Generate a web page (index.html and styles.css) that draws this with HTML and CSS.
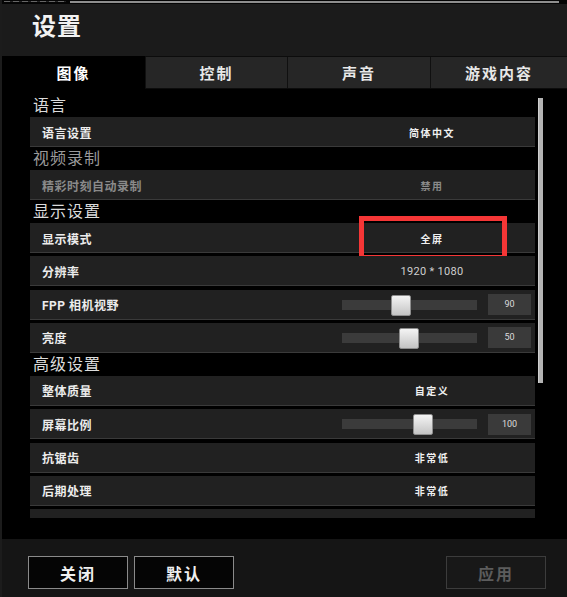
FILE: index.html
```html
<!DOCTYPE html>
<html lang="zh-CN">
<head>
<meta charset="utf-8">
<title>设置</title>
<link rel="stylesheet" href="styles.css">
</head>
<body>
<div class="window">
  <div class="topbar"><div class="topbar-dots"></div><div class="topbar-line"></div></div>
  <div class="header"><h1 class="title">设置</h1></div>
  <div class="tabs">
    <div class="tab active">图像</div>
    <div class="tab">控制</div>
    <div class="tab">声音</div>
    <div class="tab">游戏内容</div>
  </div>
  <div class="main">
    <div class="list">
      <div class="section-title">语言</div>
      <div class="row"><div class="label">语言设置</div><div class="value">简体中文</div></div>

      <div class="section-title dim">视频录制</div>
      <div class="row disabled"><div class="label">精彩时刻自动录制</div><div class="value">禁用</div></div>

      <div class="section-title">显示设置</div>
      <div class="group">
        <div class="row"><div class="label">显示模式</div><div class="value">全屏<span class="highlight"></span></div></div>
        <div class="row"><div class="label">分辨率</div><div class="value plain">1920 * 1080</div></div>
        <div class="row"><div class="label">FPP 相机视野</div>
          <div class="value slider-cell">
            <div class="track"><div class="thumb" style="left:49px"></div></div>
            <div class="num">90</div>
          </div>
        </div>
        <div class="row"><div class="label">亮度</div>
          <div class="value slider-cell">
            <div class="track"><div class="thumb" style="left:57px"></div></div>
            <div class="num">50</div>
          </div>
        </div>
      </div>

      <div class="section-title">高级设置</div>
      <div class="group">
        <div class="row"><div class="label">整体质量</div><div class="value">自定义</div></div>
        <div class="row"><div class="label">屏幕比例</div>
          <div class="value slider-cell">
            <div class="track"><div class="thumb" style="left:71px"></div></div>
            <div class="num">100</div>
          </div>
        </div>
        <div class="row"><div class="label">抗锯齿</div><div class="value">非常低</div></div>
        <div class="row"><div class="label">后期处理</div><div class="value">非常低</div></div>
        <div class="row row-partial"></div>
      </div>
    </div>
    <div class="scrollbar"></div>
  </div>
  <div class="footer">
    <button class="btn">关闭</button>
    <button class="btn">默认</button>
    <div class="spacer"></div>
    <button class="btn disabled">应用</button>
  </div>
</div>
</body>
</html>
```
FILE: styles.css
```css
* { box-sizing: border-box; }
html, body { margin: 0; padding: 0; background: #000; }
body {
  width: 567px;
  height: 597px;
  overflow: hidden;
  font-family: Roboto, "Noto Sans CJK SC", sans-serif;
  color: #eee;
}
.window {
  width: 567px;
  height: 597px;
  border-left: 2px solid #1c1c1c;
  display: flex;
  flex-direction: column;
  background: #000;
}
.topbar {
  height: 4px;
  background: #050505;
  display: flex;
  align-items: flex-start;
  padding-top: 1px;
}
.topbar-dots {
  width: 62px;
  height: 1px;
  margin-left: 2px;
  background: repeating-linear-gradient(90deg, #666 0 6px, #222 6px 9px);
}
.topbar-line {
  flex: 1;
  height: 2px;
  margin-left: 4px;
  margin-right: 8px;
  background: #8e8e8e;
}
.header {
  height: 52px;
  background: #1b1b1b;
  padding: 7px 0 0 30px;
}
.title {
  margin: 0;
  font-size: 24px;
  line-height: 32px;
  font-weight: 700;
  color: #f2f2f2;
  letter-spacing: 1px;
}
.tabs {
  height: 33px;
  display: grid;
  grid-template-columns: 143px 142px 143px 137px;
  background: #0c0c0c;
}
.tab {
  display: flex;
  align-items: center;
  justify-content: center;
  font-size: 15px;
  font-weight: 700;
  letter-spacing: 2px;
  color: #e8e8e8;
  background: #262626;
  margin: 1px 0;
  border-left: 1px solid #101010;
}
.tab.active {
  background: #000;
  margin: 0;
  border-left: none;
  color: #fff;
}
.main {
  height: 450px;
  display: flex;
  align-items: flex-start;
  padding-top: 5px;
}
.list {
  margin-left: 28px;
  width: 505px;
  height: 424px;
  overflow: hidden;
}
.section-title {
  height: 23px;
  line-height: 23px;
  font-size: 16px;
  letter-spacing: 1px;
  padding-left: 3px;
  color: #dcdcdc;
}
.section-title.dim { color: #9a9a9a; }
.group {
  display: flex;
  flex-direction: column;
  gap: 3.33px;
}
.row {
  height: 30px;
  flex-shrink: 0;
  display: flex;
  align-items: center;
  background: #212121;
  box-shadow: inset 0 -1px 0 #3a3a3a;
  position: relative;
}
.label {
  flex: 1;
  padding-left: 12px;
  font-size: 12px;
  font-weight: 700;
  letter-spacing: 0.5px;
  color: #ececec;
}
.value {
  width: 206px;
  text-align: center;
  font-size: 10px;
  font-weight: 700;
  letter-spacing: 1.5px;
  color: #f0f0f0;
}
.value.plain {
  font-weight: 400;
  font-size: 11px;
  letter-spacing: 0.3px;
  color: #cfcfcf;
}
.row.disabled .label,
.row.disabled .value { color: #8a8a8a; }
.highlight {
  position: absolute;
  left: 329px;
  top: -7px;
  width: 148px;
  height: 44px;
  border: 5px solid #f53636;
}
.slider-cell {
  display: flex;
  align-items: center;
  padding-left: 13px;
  padding-right: 4px;
  gap: 11px;
}
.track {
  position: relative;
  width: 135px;
  height: 10px;
  background: #3b3b3b;
}
.thumb {
  position: absolute;
  top: -5px;
  width: 20px;
  height: 21px;
  border-radius: 2px;
  border: 1px solid #8e8e8e;
  background: linear-gradient(#f4f4f4, #c4c4c4);
}
.num {
  width: 43px;
  height: 21px;
  line-height: 21px;
  background: #3a3a3a;
  color: #dcdcdc;
  font-size: 9px;
  font-weight: 400;
  letter-spacing: 0;
  text-align: center;
}
.scrollbar {
  margin-left: 3px;
  margin-top: 4px;
  width: 5px;
  height: 285px;
  background: #b4b4b4;
  border-left: 1px solid #cfcfcf;
}
.footer {
  height: 58px;
  background: #151515;
  display: flex;
  align-items: flex-start;
  padding: 17px 21px 0 26px;
  gap: 6px;
}
.spacer { flex: 1; }
.btn {
  width: 100px;
  height: 33px;
  background: #050505;
  border: 1px solid #8a8a8a;
  color: #f0f0f0;
  font-family: Roboto, "Noto Sans CJK SC", sans-serif;
  font-size: 16px;
  font-weight: 700;
  letter-spacing: 2px;
  padding: 0;
}
.btn.disabled {
  background: #181818;
  border-color: #3c3c3c;
  color: #5c5c5c;
}
```
